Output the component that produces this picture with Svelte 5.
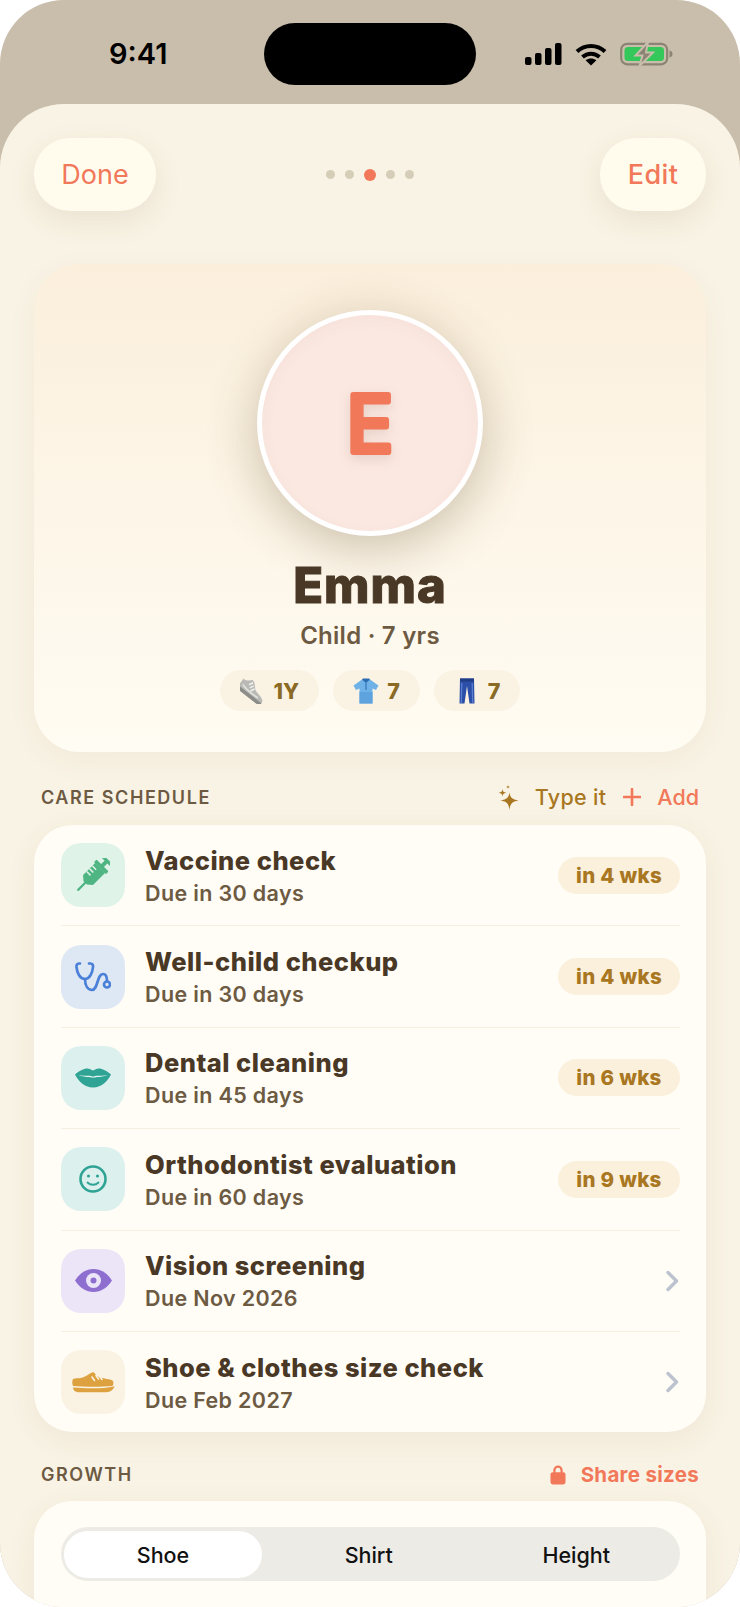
<script>
  const rows = [
    { icon: 'syringe', tint: 'green', title: 'Vaccine check', due: 'Due in 30 days', badge: 'in 4 wks' },
    { icon: 'stethoscope', tint: 'blue', title: 'Well-child checkup', due: 'Due in 30 days', badge: 'in 4 wks' },
    { icon: 'lips', tint: 'teal', title: 'Dental cleaning', due: 'Due in 45 days', badge: 'in 6 wks' },
    { icon: 'smile', tint: 'teal', title: 'Orthodontist evaluation', due: 'Due in 60 days', badge: 'in 9 wks' },
    { icon: 'eye', tint: 'purple', title: 'Vision screening', due: 'Due Nov 2026' },
    { icon: 'shoe', tint: 'sand', title: 'Shoe & clothes size check', due: 'Due Feb 2027' }
  ];
  const dots = [0, 1, 2, 3, 4];
  const tabs = ['Shoe', 'Shirt', 'Height'];
</script>

<div class="phone">
  <header class="status">
    <span class="time">9:41</span>
    <div class="island"></div>
    <div class="status-icons">
      <svg width="37" height="22" viewBox="0 0 37 22" fill="#000">
        <rect x="0" y="14" width="6.5" height="8" rx="2" />
        <rect x="10" y="10" width="6.5" height="12" rx="2" />
        <rect x="20" y="5" width="6.5" height="17" rx="2" />
        <rect x="30" y="0" width="6.5" height="22" rx="2" />
      </svg>
      <svg width="32" height="23" viewBox="0 0 32 23" fill="none" stroke="#000" stroke-width="4">
        <path d="M2 8.500C10 1 22 1 30 8.500" />
        <path d="M7.500 14c5-4.400 12-4.400 17 0" />
        <path d="M16 22.500l-5.400-5.200c3.200-2.400 7.600-2.400 10.800 0z" fill="#000" stroke="none" />
      </svg>
      <svg width="53" height="24" viewBox="0 0 53 24">
        <rect x="1.200" y="1.800" width="46" height="20.500" rx="6" fill="none" stroke="#8b8374" stroke-width="2.200" />
        <rect x="4.500" y="5" width="39.500" height="14" rx="3.500" fill="#34c759" />
        <path d="M49.500 8.500c2 .4 3 1.800 3 3.500s-1 3.100-3 3.500z" fill="#8b8374" />
        <path d="M28 0L15.500 13.500h7L19.500 24 33 10.500h-7z" fill="#8b8374" stroke="#c9bdab" stroke-width="2" />
      </svg>
    </div>
  </header>

  <main class="sheet">
    <nav class="topbar">
      <button class="round done">Done</button>
      <div class="dots">
        {#each dots as d}
          <span class="dot" class:active={d === 2}></span>
        {/each}
      </div>
      <button class="round edit">Edit</button>
    </nav>

    <section class="hero">
      <div class="avatar">
        <svg class="initial" width="80" height="90" viewBox="0 0 80 90">
          <text x="40" y="74" text-anchor="middle">E</text>
        </svg>
      </div>
      <h1>Emma</h1>
      <p class="role">Child · 7 yrs</p>
      <div class="chips">
        <span class="chip">
          <svg width="26" height="26" viewBox="0 0 26 26">
            <g transform="rotate(38 13 13)">
              <path d="M-2 9c2 .5 3.500 0 5-1.500l3-3 3 1 5 5c3 1.500 9 1.500 12 4 1.500 1.500 1.500 3 1 4.500H-2z" fill="#b9b9b6" />
              <path d="M-2 17.500h29c.5 2-.5 3.500-2.500 3.500H0c-2 0-2.500-1.500-2-3.500z" fill="#8c8c89" />
              <path d="M8 6.500l-2 4M10.500 8.500l-2 4M13 10.500l-2 4" stroke="#f0f0ee" stroke-width="1.500" />
              <path d="M1 14c5 2.500 12 2 20 1.500" fill="none" stroke="#e2e2df" stroke-width="1.600" />
            </g>
          </svg>
          1Y
        </span>
        <span class="chip">
          <svg width="26" height="26" viewBox="0 0 26 26">
            <path d="M9 1.500h8l8.500 6-2.500 4.500-3.500-1.500V25.500h-13V10.500l-3.500 1.500L.5 7.500z" fill="#6fb2e8" />
            <path d="M6.500 14h13v11.500h-13z" fill="#5fa3de" />
            <path d="M9 1.500l4 3.500 4-3.500-1-1h-6z" fill="#2d6cb0" />
            <path d="M13 5v7" stroke="#3f82c4" stroke-width="1.500" />
          </svg>
          7
        </span>
        <span class="chip">
          <svg width="26" height="26" viewBox="0 0 26 26">
            <path d="M6 .5h14l.5 25h-5L13 8l-2.500 17.500h-5z" fill="#2b4fa8" />
            <path d="M6 .5h14v3H6z" fill="#1f3c85" />
            <path d="M7.800 5l-.5 20M18.200 5l.5 20" stroke="#5e80cf" stroke-width="1.200" />
          </svg>
          7
        </span>
      </div>
    </section>

    <div class="section-head">
      <h2>CARE SCHEDULE</h2>
      <div class="actions">
        <span class="action gold">
          <svg width="21" height="25" viewBox="0 0 21 25" fill="#a97722">
            <path d="M11.500 7.500c.8 5 2.500 7 9 8-6.500 1-8.200 3-9 9.500-.8-6.500-2.500-8.500-9-9.500 6.500-1 8.200-3 9-8z" />
            <path d="M4.500 4c.4 2.600 1 3.300 4 3.800-3 .5-3.600 1.200-4 3.900-.4-2.700-1-3.400-4-3.900 3-.5 3.600-1.200 4-3.800z" />
            <path d="M10 0c.2 1.400.6 1.800 2 2-1.400.2-1.800.6-2 2-.2-1.400-.6-1.800-2-2 1.400-.2 1.800-.6 2-2z" />
          </svg>
          Type it
        </span>
        <span class="action coral">
          <svg width="18" height="18" viewBox="0 0 18 18" stroke="#f2785a" stroke-width="2.600" stroke-linecap="round">
            <path d="M9 1v16M1 9h16" />
          </svg>
          Add
        </span>
      </div>
    </div>

    <section class="card schedule">
      {#each rows as row}
        <div class="row">
          <div class="tile {row.tint}">
            {#if row.icon === 'syringe'}
              <svg width="34" height="34" viewBox="0 0 34 34">
                <g transform="rotate(45 17 17)" fill="#4fb583">
                  <rect x="11" y="-4.500" width="12" height="3.200" rx="1" />
                  <rect x="15" y="-2" width="4" height="7" />
                  <rect x="8.500" y="3.500" width="17" height="3.800" rx="1" />
                  <path d="M10 7h14v17l-4.500 4h-5L10 24z" />
                  <rect x="15.900" y="27" width="2.200" height="12" rx="1" />
                </g>
                <g transform="rotate(45 17 17)" stroke="#e0f3e9" stroke-width="1.500">
                  <path d="M10 11h5.500M10 15h5.500M10 19h5.500" />
                </g>
              </svg>
            {:else if row.icon === 'stethoscope'}
              <svg width="36" height="31" viewBox="0 0 36 31" fill="none" stroke="#4a80d8" stroke-width="2.700" stroke-linecap="round">
                <path d="M5 2.500H4C2 2.500 1.300 4 1.500 6 2 12 5 18 10 18c4.500 0 7.500-6 8-12 .2-2-.5-3.500-2.500-3.500H14" />
                <path d="M10 18c0 7 3 11 7 11 6 0 5-16 11-16 3.500 0 4 4 4 7" />
                <circle cx="32" cy="23.500" r="3" />
              </svg>
            {:else if row.icon === 'lips'}
              <svg width="36" height="20" viewBox="0 0 36 20">
                <path d="M0 6.500C4 3 9 .5 12 .5c2.500 0 4.500 1.500 6 2 1.500-.5 3.500-2 6-2 3 0 8 2.500 12 6-3 6-9 13-18 13S3 12.500 0 6.500z" fill="#2fa394" />
                <path d="M3 7c4 1 9 .5 12 .8 1.200.1 2 .8 3 .8s1.800-.7 3-.8c3-.3 8 .2 12-.8-4 1.500-8 1.900-11 2.100-1.500.1-2.500.7-4 .7s-2.500-.6-4-.7C11 8.900 7 8.500 3 7z" fill="#e6f5f2" />
              </svg>
            {:else if row.icon === 'smile'}
              <svg width="30" height="30" viewBox="0 0 30 30" fill="none">
                <circle cx="15" cy="15" r="12.500" stroke="#2fa394" stroke-width="2.600" />
                <circle cx="10.500" cy="12" r="1.600" fill="#2fa394" />
                <circle cx="19.500" cy="12" r="1.600" fill="#2fa394" />
                <path d="M9.500 18.500c3 3 8 3 11 0" stroke="#2fa394" stroke-width="1.800" stroke-linecap="round" />
              </svg>
            {:else if row.icon === 'eye'}
              <svg width="37" height="23" viewBox="0 0 37 23">
                <path d="M0 11.500C5 4 11 0 18.500 0S32 4 37 11.500C32 19 26 23 18.500 23S5 19 0 11.500z" fill="#8e6fd0" />
                <circle cx="18.500" cy="11.500" r="7.500" fill="#ece5f8" />
                <circle cx="18.500" cy="11.500" r="3" fill="#8e6fd0" />
              </svg>
            {:else}
              <svg width="43" height="21" viewBox="0 0 43 21" fill="#dda23f">
                <path d="M1 7c2-1 6-.5 8-1 4-1 8-4 11-5.500 1-.5 2-.5 2.500.5 1.500 2 3 3.500 6 4.500 4 1.300 9 1.500 12 3 1.500 1 1 4 0 5.500-10 1-28 1-39.500 0-1-2-1-5.500 0-7z" />
                <path d="M1 15.500c12 1 30 1.500 41-1 .6-.1.8 0 .5.500-2 3-4 5-8 5.200H9c-5 .3-7.500-1-8-4.700z" />
                <path d="M20 5l2.500 3.500M24 3.500l2.500 3.500M28 5l2 2.500" stroke="#fbf3e2" stroke-width="1.600" stroke-linecap="round" />
              </svg>
            {/if}
          </div>
          <div class="row-text">
            <div class="row-title">{row.title}</div>
            <div class="row-due">{row.due}</div>
          </div>
          {#if row.badge}
            <span class="badge">{row.badge}</span>
          {:else}
            <svg class="chevron" width="15" height="22" viewBox="0 0 15 22" fill="none" stroke="#bcc3ce" stroke-width="3.500" stroke-linecap="round" stroke-linejoin="round">
              <path d="M3 2.500l8.500 8.500L3 19.500" />
            </svg>
          {/if}
        </div>
      {/each}
    </section>

    <div class="section-head growth-head">
      <h2>GROWTH</h2>
      <span class="share">
        <svg width="16" height="21" viewBox="0 0 17 21" fill="#f2785a">
          <path d="M3.500 9V6a5 5 0 0 1 10 0v3h-2.400V6a2.600 2.600 0 0 0-5.200 0v3z" />
          <rect x="0.500" y="8" width="16" height="13" rx="2.500" />
        </svg>
        Share sizes
      </span>
    </div>

    <section class="card growth">
      <div class="segments">
        {#each tabs as tab, i}
          <span class="segment" class:selected={i === 0}>{tab}</span>
        {/each}
      </div>
    </section>
  </main>
</div>

<style>
  :global(body) {
    background: #fff;
  }

  .phone {
    width: 740px;
    height: 1607px;
    display: flex;
    flex-direction: column;
    overflow: hidden;
    border-radius: 64px;
    background: #c9bdab;
    font-family: Inter, "Liberation Sans", sans-serif;
  }

  .status {
    position: relative;
    flex: none;
    height: 104px;
  }

  .time {
    position: absolute;
    left: 109px;
    top: 36px;
    font-size: 29px;
    font-weight: 600;
    line-height: 36px;
    color: #000;
  }

  .island {
    position: absolute;
    left: 264px;
    top: 23px;
    width: 212px;
    height: 62px;
    border-radius: 31px;
    background: #000;
  }

  .status-icons {
    position: absolute;
    left: 525px;
    top: 42px;
    display: flex;
    align-items: center;
    gap: 13px;
  }

  .sheet {
    flex: 1;
    min-height: 0;
    overflow: hidden;
    padding: 34px 34px 0;
    border-radius: 64px 64px 0 0;
    background: #f9f3e5;
  }

  .topbar {
    display: flex;
    align-items: center;
    justify-content: space-between;
    position: relative;
  }

  .round {
    height: 73px;
    border: none;
    border-radius: 36px;
    background: #fffcee;
    color: #f2785a;
    font-family: inherit;
    font-size: 27px;
    box-shadow: 0 10px 28px rgba(110, 85, 40, 0.1);
  }

  .done {
    width: 122px;
    font-weight: 400;
  }

  .edit {
    width: 106px;
    font-weight: 500;
    letter-spacing: 0.4px;
  }

  .dots {
    display: flex;
    align-items: center;
    gap: 10px;
    margin-right: 16px;
  }

  .dot {
    width: 9px;
    height: 9px;
    border-radius: 50%;
    background: #d6cdb8;
  }

  .dot.active {
    width: 12px;
    height: 12px;
    background: #f2785a;
  }

  .hero {
    margin-top: 53px;
    height: 488px;
    box-sizing: border-box;
    padding-top: 46px;
    display: flex;
    flex-direction: column;
    align-items: center;
    border-radius: 46px;
    background: linear-gradient(180deg, #fbefdc 0%, #fffcf3 100%);
    box-shadow: 0 8px 30px rgba(110, 85, 40, 0.05);
  }

  .avatar {
    width: 226px;
    height: 226px;
    box-sizing: border-box;
    display: flex;
    align-items: center;
    justify-content: center;
    border: 5px solid #fff;
    border-radius: 50%;
    background: #fbe8e1;
    box-shadow: 0 12px 50px rgba(90, 65, 25, 0.3), inset 0 4px 16px rgba(90, 65, 25, 0.04);
  }

  .initial text {
    font-family: Inter, sans-serif;
    font-size: 78px;
    font-weight: 400;
    fill: #f2785a;
    stroke: #f2785a;
    stroke-width: 6px;
    stroke-linejoin: round;
  }

  .initial {
    overflow: visible;
    filter: drop-shadow(0 4px 6px rgba(90, 65, 25, 0.14));
  }

  h1 {
    margin: 20px 0 0;
    font-size: 49px;
    font-weight: 800;
    letter-spacing: 1px;
    line-height: 60px;
    color: #4a3826;
    -webkit-text-stroke: 1px #4a3826;
  }

  .role {
    margin: 5px 0 0;
    font-size: 24px;
    font-weight: 600;
    letter-spacing: 0.25px;
    line-height: 30px;
    color: #6d5a42;
  }

  .chips {
    display: flex;
    gap: 14px;
    margin-top: 19px;
  }

  .chip {
    height: 41px;
    padding: 0 20px;
    display: flex;
    align-items: center;
    gap: 8px;
    border-radius: 21px;
    background: #faf3e4;
    color: #8a6a24;
    font-size: 21.500px;
    font-weight: 800;
  }

  .section-head {
    display: flex;
    align-items: center;
    justify-content: space-between;
    height: 26px;
    margin-top: 32px;
    padding: 0 7px;
  }

  h2 {
    margin: 0;
    font-size: 18px;
    font-weight: 600;
    letter-spacing: 1.550px;
    color: #6d5a42;
  }

  .actions {
    display: flex;
    gap: 17px;
  }

  .action {
    display: flex;
    align-items: center;
    gap: 16px;
    font-size: 21.500px;
    font-weight: 500;
  }

  .gold {
    color: #a97722;
    letter-spacing: 0.3px;
  }

  .coral {
    color: #f2785a;
  }

  .card {
    margin-top: 15px;
    border-radius: 38px;
    background: #fffdf6;
    box-shadow: 0 8px 30px rgba(110, 85, 40, 0.07);
  }

  .schedule {
    padding: 0 26px 0 27px;
  }

  .row {
    height: 101.400px;
    box-sizing: border-box;
    display: flex;
    align-items: center;
    border-bottom: 1px solid #f6f0e3;
  }

  .row:last-child {
    height: 100.400px;
    border-bottom: none;
  }

  .tile {
    flex: none;
    width: 64px;
    height: 64px;
    display: flex;
    align-items: center;
    justify-content: center;
    border-radius: 20px;
  }

  .green { background: #e0f3e9; }
  .blue { background: #dee7f4; }
  .teal { background: #dcf0ee; }
  .purple { background: #ece5f8; }
  .sand { background: #faf3e4; }

  .row-text {
    flex: 1;
    margin: 1px 0 0 20px;
  }

  .row-title {
    font-size: 25.500px;
    font-weight: 800;
    letter-spacing: 0.5px;
    line-height: 32px;
    color: #4a3826;
  }

  .row-due {
    margin-top: 2px;
    font-size: 21.500px;
    font-weight: 600;
    letter-spacing: 0.35px;
    line-height: 28px;
    color: #6d5a42;
  }

  .badge {
    height: 37px;
    width: 122px;
    display: flex;
    align-items: center;
    justify-content: center;
    border-radius: 19px;
    background: #fbf0dc;
    color: #a97722;
    font-size: 20.500px;
    font-weight: 800;
    letter-spacing: 0.3px;
  }

  .growth-head {
    margin-top: 29px;
  }

  .share {
    display: flex;
    align-items: center;
    gap: 15px;
    color: #f2785a;
    font-size: 20.500px;
    font-weight: 700;
    letter-spacing: 0.3px;
  }

  .growth {
    margin-top: 14px;
    padding: 26px 26px 60px 27px;
  }

  .segments {
    height: 54px;
    box-sizing: border-box;
    padding: 4px 3px 3px;
    display: grid;
    grid-template-columns: 198px 1fr 1fr;
    border-radius: 27px;
    background: #edebe5;
  }

  .segment {
    display: flex;
    align-items: center;
    justify-content: center;
    margin-left: 6px;
    font-size: 21.500px;
    font-weight: 450;
    color: #111;
  }

  .segment.selected {
    margin-left: 0;
    border-radius: 24px;
    background: #fff;
  }
</style>
